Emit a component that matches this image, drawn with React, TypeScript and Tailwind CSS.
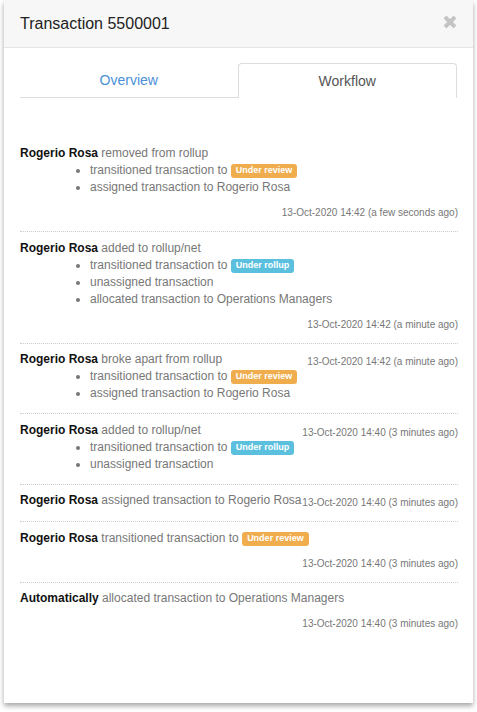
import React from "react";

type Badge = { text: string; kind: "warning" | "info" };

const Label = ({ b }: { b: Badge }) => (
  <span
    className={
      "inline-block align-[1px] text-[9px] font-bold leading-[9px] text-white rounded-[3px] px-[5px] pt-[2px] pb-[3px] " +
      (b.kind === "warning" ? "bg-[#f0ad4e]" : "bg-[#5bc0de]")
    }
  >
    {b.text}
  </span>
);

type Item = { text: string; badge?: Badge };
type Entry = {
  who: string;
  action: string;
  titleBadge?: Badge;
  items?: Item[];
  time: string;
  inline: boolean;
};

const review: Badge = { text: "Under review", kind: "warning" };
const rollup: Badge = { text: "Under rollup", kind: "info" };

const entries: Entry[] = [
  {
    who: "Rogerio Rosa",
    action: "removed from rollup",
    items: [
      { text: "transitioned transaction to", badge: review },
      { text: "assigned transaction to Rogerio Rosa" },
    ],
    time: "13-Oct-2020 14:42 (a few seconds ago)",
    inline: false,
  },
  {
    who: "Rogerio Rosa",
    action: "added to rollup/net",
    items: [
      { text: "transitioned transaction to", badge: rollup },
      { text: "unassigned transaction" },
      { text: "allocated transaction to Operations Managers" },
    ],
    time: "13-Oct-2020 14:42 (a minute ago)",
    inline: false,
  },
  {
    who: "Rogerio Rosa",
    action: "broke apart from rollup",
    items: [
      { text: "transitioned transaction to", badge: review },
      { text: "assigned transaction to Rogerio Rosa" },
    ],
    time: "13-Oct-2020 14:42 (a minute ago)",
    inline: true,
  },
  {
    who: "Rogerio Rosa",
    action: "added to rollup/net",
    items: [
      { text: "transitioned transaction to", badge: rollup },
      { text: "unassigned transaction" },
    ],
    time: "13-Oct-2020 14:40 (3 minutes ago)",
    inline: true,
  },
  {
    who: "Rogerio Rosa",
    action: "assigned transaction to Rogerio Rosa",
    time: "13-Oct-2020 14:40 (3 minutes ago)",
    inline: true,
  },
  {
    who: "Rogerio Rosa",
    action: "transitioned transaction to",
    titleBadge: review,
    time: "13-Oct-2020 14:40 (3 minutes ago)",
    inline: false,
  },
  {
    who: "Automatically",
    action: "allocated transaction to Operations Managers",
    time: "13-Oct-2020 14:40 (3 minutes ago)",
    inline: false,
  },
];

const Body = ({ e }: { e: Entry }) => (
  <div className="min-w-0 whitespace-nowrap">
    <div className="leading-[17px] h-[17px]">
      <span className="font-bold text-[#111]">{e.who}</span>{" "}
      <span className="text-[#777]">{e.action}</span>
      {e.titleBadge && (
        <>
          {" "}
          <Label b={e.titleBadge} />
        </>
      )}
    </div>
    {e.items && (
      <ul
        className={
          "list-disc pl-[70px] text-[#777] marker:text-[#777] " + (e.inline ? "pb-[1px]" : "")
        }
      >
        {e.items.map((it, i) => (
          <li key={i} className="leading-[17px] h-[17px]">
            {it.text}
            {it.badge && (
              <>
                {" "}
                <Label b={it.badge} />
              </>
            )}
          </li>
        ))}
      </ul>
    )}
  </div>
);

const Time = ({ t, cls }: { t: string; cls: string }) => (
  <div className={"shrink-0 text-[10px] leading-[16px] text-[#777] text-right whitespace-nowrap " + cls}>{t}</div>
);

export default function App() {
  return (
    <div
      className="w-[477px] h-[712px] bg-white px-[4px]"
      style={{ fontFamily: '"Liberation Sans", Arial, sans-serif' }}
    >
      <div className="h-[703px] bg-white shadow-[0_3px_5px_rgba(0,0,0,0.35)] flex flex-col">
        <div className="h-[48px] bg-[#f7f7f7] border-b border-[#e5e5e5] px-[16px] flex items-center justify-between">
          <div className="text-[16px] text-[#222] leading-[20px] mt-[1px]">Transaction 5500001</div>
          <svg width="14" height="14" viewBox="0 0 14 14" className="mt-[-3px]">
            <path d="M2 2 L12 12 M12 2 L2 12" stroke="#c4c4c4" strokeWidth="4" strokeLinecap="butt" />
          </svg>
        </div>
        <div className="pl-[16px] pr-[15px] text-[12px]">
          <div className="flex mt-[15px] pr-[1px] text-[14px] leading-[17px]">
            <div className="flex-1 h-[35px] border-b border-[#ddd] flex items-center justify-center text-[#4a90d9]">
              Overview
            </div>
            <div className="flex-1 h-[35px] border border-b-0 border-[#ddd] rounded-t-[4px] flex items-center justify-center text-[#555]">
              Workflow
            </div>
          </div>
          <div className="mt-[39.5px]">
            {entries.map((e, i) => (
              <div
                key={i}
                className={
                  "pt-[7.5px] pb-[10px] " +
                  (i < entries.length - 1 ? "border-b border-dotted border-[#ccc]" : "")
                }
              >
                {e.inline ? (
                  <div className="flex justify-between items-start">
                    <Body e={e} />
                    <Time t={e.time} cls="mt-[3px]" />
                  </div>
                ) : (
                  <>
                    <Body e={e} />
                    <Time t={e.time} cls="mt-[9px]" />
                  </>
                )}
              </div>
            ))}
          </div>
        </div>
      </div>
    </div>
  );
}
